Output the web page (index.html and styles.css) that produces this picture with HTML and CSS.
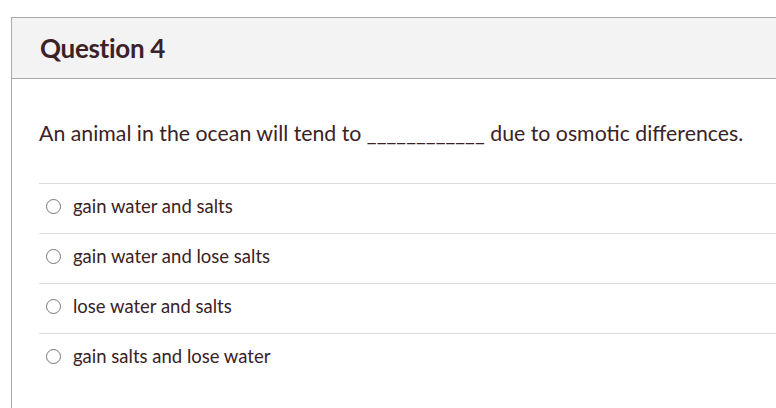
FILE: index.html
```html
<!DOCTYPE html>
<html>
<head>
<meta charset="utf-8">
<link rel="stylesheet" href="styles.css">
</head>
<body>
<div class="quiz">
  <div class="header"><h2 class="title">Question 4</h2></div>
  <div class="body">
    <p class="question">An animal in the ocean will tend to <span class="blank">____________</span> due to osmotic differences.</p>
    <div class="answers">
      <label class="answer"><span class="radio"></span><span class="label">gain water and salts</span></label>
      <label class="answer"><span class="radio"></span><span class="label">gain water and lose salts</span></label>
      <label class="answer"><span class="radio"></span><span class="label">lose water and salts</span></label>
      <label class="answer"><span class="radio"></span><span class="label">gain salts and lose water</span></label>
    </div>
  </div>
</div>
</body>
</html>
```
FILE: styles.css
```css
html, body { margin: 0; padding: 0; background: #fff; }
body {
  font-family: Lato, "Liberation Sans", sans-serif;
  color: #3b2226;
  padding: 17px 0 0 11px;
}
.quiz {
  border-top: 1px solid #aaaaaa;
  border-left: 1px solid #aaaaaa;
  min-height: 400px;
}
.header {
  background: #f3f3f3;
  border-bottom: 1px solid #aaaaaa;
  height: 60px;
  display: flex;
  align-items: center;
  padding-left: 28px;
}
.title {
  margin: 0;
  font-size: 26px;
  font-weight: 700;
  letter-spacing: -0.3px;
}
.body {
  padding: 0 0 0 27px;
}
.question {
  margin: 0;
  padding-top: 41px;
  height: 63px;
  font-size: 21.3px;
  line-height: 26px;
}
.blank { letter-spacing: 0.05px; }
.answers { display: flex; flex-direction: column; }
.answer {
  box-sizing: border-box;
  display: flex;
  align-items: center;
  border-top: 1px solid #dddddd;
  height: 50px;
  padding: 0 0 6px 7px;
  font-size: 18.5px;
}
.radio {
  box-sizing: border-box;
  width: 15px;
  height: 15px;
  border: 1px solid #777;
  border-radius: 50%;
  margin-right: 12px;
  margin-top: 1px;
}
```
